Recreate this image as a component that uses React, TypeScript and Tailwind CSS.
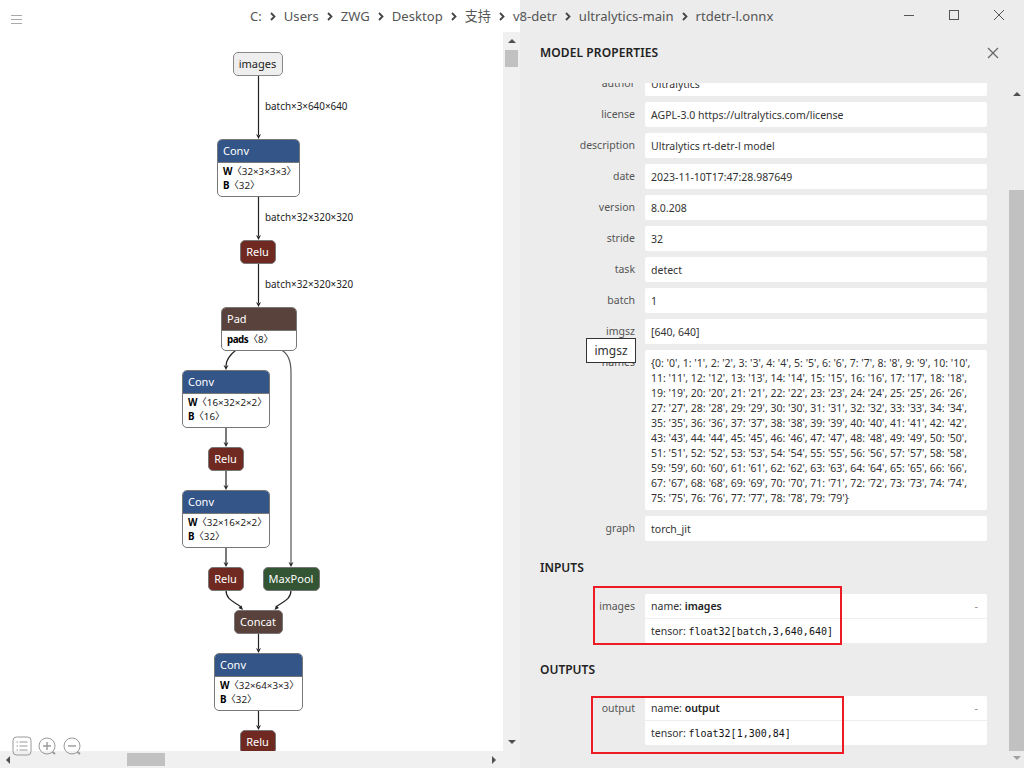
const FONT = "font-['Noto_Sans','Noto_Sans_CJK_SC',sans-serif]";

const NAMES = [
  "{0: '0', 1: '1', 2: '2', 3: '3', 4: '4', 5: '5', 6: '6', 7: '7', 8: '8', 9: '9', 10: '10',",
  "11: '11', 12: '12', 13: '13', 14: '14', 15: '15', 16: '16', 17: '17', 18: '18',",
  "19: '19', 20: '20', 21: '21', 22: '22', 23: '23', 24: '24', 25: '25', 26: '26',",
  "27: '27', 28: '28', 29: '29', 30: '30', 31: '31', 32: '32', 33: '33', 34: '34',",
  "35: '35', 36: '36', 37: '37', 38: '38', 39: '39', 40: '40', 41: '41', 42: '42',",
  "43: '43', 44: '44', 45: '45', 46: '46', 47: '47', 48: '48', 49: '49', 50: '50',",
  "51: '51', 52: '52', 53: '53', 54: '54', 55: '55', 56: '56', 57: '57', 58: '58',",
  "59: '59', 60: '60', 61: '61', 62: '62', 63: '63', 64: '64', 65: '65', 66: '66',",
  "67: '67', 68: '68', 69: '69', 70: '70', 71: '71', 72: '72', 73: '73', 74: '74',",
  "75: '75', 76: '76', 77: '77', 78: '78', 79: '79'}",
];

const PROPS = [
  ["author", "Ultralytics"],
  ["license", "AGPL-3.0 https://ultralytics.com/license"],
  ["description", "Ultralytics rt-detr-l model"],
  ["date", "2023-11-10T17:47:28.987649"],
  ["version", "8.0.208"],
  ["stride", "32"],
  ["task", "detect"],
  ["batch", "1"],
  ["imgsz", "[640, 640]"],
];

const CRUMBS = ["C:", "Users", "ZWG", "Desktop", "支持", "v8-detr", "ultralytics-main"];

function Chevron() {
  return (
    <svg width="6" height="9" viewBox="0 0 6 9" className="mx-[8px]">
      <path d="M1 1l3.5 3.5L1 8" fill="none" stroke="#444" strokeWidth="1.8" />
    </svg>
  );
}

function Pill({ className, label }: { className: string; label: string }) {
  return (
    <div className={`absolute flex h-[24px] items-center justify-center rounded-[5px] border-[1.5px] border-[#777] pr-[1px] text-[11px] text-white ${className}`}>
      {label}
    </div>
  );
}

function OpNode({ className, head, title, rows }: { className: string; head: string; title: string; rows: [string, string][] }) {
  return (
    <div className={`absolute overflow-hidden rounded-[5px] border-[1.5px] border-[#777] bg-white text-[9.8px] leading-[14px] text-[#222] ${className}`}>
      <div className={`flex h-[22px] items-center pb-[1px] pl-[5px] text-[11px] text-white ${head}`}>{title}</div>
      <div className="border-t border-[#777] pt-[2px] pl-[5px]">
        {rows.map(([k, v]) => (
          <div key={k} className="whitespace-nowrap">
            <b className="font-bold tracking-[-0.5px] text-black">{k}</b>
            <span>{v}</span>
          </div>
        ))}
      </div>
    </div>
  );
}

function EdgeLabel({ className, text }: { className: string; text: string }) {
  return <div className={`absolute text-[9.9px] leading-[14px] whitespace-nowrap text-[#222] ${className}`}>{text}</div>;
}

function Graph() {
  const arrows = [
    [258.5, 139], [258.5, 240], [258.5, 307], [226, 370], [226, 447], [226, 490], [226, 567],
    [291, 567], [258.5, 653], [258.5, 730],
  ];
  return (
    <div className="relative w-[503px] overflow-hidden bg-white">
      <svg className="absolute top-0 left-0" width="503" height="719" viewBox="0 32 503 719" fill="none">
        <g stroke="#222" strokeWidth="1.2">
          <path d="M258.5 75V135M258.5 196V236M258.5 263V303M258.5 633V649M258.5 710V726" />
          <path d="M226 427V443M226 470V486M226 547V563" />
          <path d="M236 350C231 354 226 359 226 366" />
          <path d="M281.5 350C287 353 291 359 291 372V563" stroke="#555" />
          <path d="M226 590C226 601 236 602 241 607" />
          <path d="M291 590C291 601 281 602 276 607" />
        </g>
        <g fill="#222">
          {arrows.map(([x, y]) => (
            <path key={`${x}-${y}`} d={`M${x} ${y}l-2.5 -5l2.5 1.5l2.5 -1.5z`} />
          ))}
          <path d="M243 610l-4.5 -2l3 -2.5z" />
          <path d="M274.5 610l4.5 -2l-3 -2.5z" />
        </g>
      </svg>

      <div className="absolute top-[20px] left-[233px] flex h-[24px] w-[50px] items-center justify-center rounded-[5px] border-[1.5px] border-[#888] bg-[#eeeeee] pr-[1px] text-[11px] text-[#222]">
        images
      </div>
      <EdgeLabel className="top-[67px] left-[265px]" text="batch×3×640×640" />
      <OpNode className="top-[107px] left-[217px] h-[58px] w-[83px]" head="bg-[#335588]" title="Conv" rows={[["W", "〈32×3×3×3〉"], ["B", "〈32〉"]]} />
      <EdgeLabel className="top-[178px] left-[265px]" text="batch×32×320×320" />
      <Pill className="top-[208px] left-[240px] w-[36px] bg-[#702921]" label="Relu" />
      <EdgeLabel className="top-[245px] left-[265px]" text="batch×32×320×320" />
      <OpNode className="top-[275px] left-[221px] h-[44px] w-[76px]" head="bg-[#59423b]" title="Pad" rows={[["pads", "〈8〉"]]} />
      <OpNode className="top-[338px] left-[182px] h-[58px] w-[88px]" head="bg-[#335588]" title="Conv" rows={[["W", "〈16×32×2×2〉"], ["B", "〈16〉"]]} />
      <Pill className="top-[415px] left-[208px] w-[36px] bg-[#702921]" label="Relu" />
      <OpNode className="top-[458px] left-[182px] h-[58px] w-[88px]" head="bg-[#335588]" title="Conv" rows={[["W", "〈32×16×2×2〉"], ["B", "〈32〉"]]} />
      <Pill className="top-[535px] left-[208px] w-[36px] bg-[#702921]" label="Relu" />
      <Pill className="top-[535px] left-[263px] w-[57px] bg-[#335533]" label="MaxPool" />
      <Pill className="top-[578px] left-[234px] w-[49px] bg-[#59423b]" label="Concat" />
      <OpNode className="top-[621px] left-[214px] h-[58px] w-[89px]" head="bg-[#335588]" title="Conv" rows={[["W", "〈32×64×3×3〉"], ["B", "〈32〉"]]} />
      <Pill className="top-[698px] left-[240px] w-[36px] bg-[#702921]" label="Relu" />
    </div>
  );
}

function LeftPane() {
  return (
    <div className="flex w-[520px] flex-col">
      <div className="h-[32px] bg-white" />
      <div className="flex h-[719px]">
        <Graph />
        <div className="flex w-[17px] flex-col items-center bg-[#f0f0f0] pt-[7px]">
          <div className="h-0 w-0 border-x-[4px] border-b-[4px] border-x-transparent border-b-[#505050]" />
          <div className="mt-[7px] h-[17px] w-[13px] bg-[#c1c1c1]" />
          <div className="mt-auto mb-[7px] h-0 w-0 border-x-[4px] border-t-[4px] border-x-transparent border-t-[#505050]" />
        </div>
      </div>
      <div className="flex h-[17px] items-center bg-[#f0f0f0] pl-[6px]">
        <div className="h-0 w-0 border-y-[4px] border-r-[4px] border-y-transparent border-r-[#505050]" />
        <div className="ml-[117px] h-[13px] w-[38px] bg-[#c1c1c1]" />
        <div className="ml-[327px] h-0 w-0 border-y-[4px] border-l-[4px] border-y-transparent border-l-[#505050]" />
      </div>
    </div>
  );
}

function PropRow({ label, children }: { label: string; children: React.ReactNode }) {
  return (
    <div className="mb-[6px] flex">
      <div className="w-[105px] shrink-0 pt-[5px] pr-[10px] text-right text-[#555]">{label}</div>
      <div className="w-[342px] rounded-[2px] bg-white px-[6px] pt-[5.5px] pb-[4.5px] text-[#333]">{children}</div>
    </div>
  );
}

function ArgRow({ label, name, type, box }: { label: string; name: string; type: string; box: string }) {
  return (
    <div className="relative flex">
      <div className="w-[105px] shrink-0 pt-[5px] pr-[10px] text-right text-[#555]">{label}</div>
      <div className="w-[342px] rounded-[2px] bg-white text-[#333]">
        <div className="flex h-[25px] items-center justify-between border-b border-[#eeeeee] px-[6px] pt-[1px]">
          <span>
            name: <b className="font-semibold text-[#222]">{name}</b>
          </span>
          <span className="pr-[3px] text-[#888]">-</span>
        </div>
        <div className="flex h-[24px] items-center px-[6px]">
          <span>tensor:&nbsp;</span>
          <code className="font-['DejaVu_Sans_Mono',monospace] text-[10px] text-[#111]">{type}</code>
        </div>
      </div>
      <div className={`absolute border-2 border-[#ed1c24] ${box}`} />
    </div>
  );
}

function RightPane() {
  return (
    <div className="flex w-[504px] flex-col bg-[#ececec] text-[10.5px] leading-[15px]">
      <div className="flex h-[83px] shrink-0 items-start justify-between pt-[45px] pr-[25px] pl-[20px]">
        <h1 className="text-[12px] leading-[15px] font-semibold tracking-[0.1px] text-[#222]">MODEL PROPERTIES</h1>
        <svg width="12" height="12" viewBox="0 0 12 12" className="mt-[2px]">
          <path d="M1 1l10 10M11 1L1 11" stroke="#666" strokeWidth="1.2" />
        </svg>
      </div>
      <div className="flex h-[685px]">
        <div className="w-[489px] overflow-hidden pl-[20px]">
          <div className="mt-[-12px]">
            {PROPS.map(([k, v]) => (
              <PropRow key={k} label={k}>{v}</PropRow>
            ))}
            <PropRow label="names">
              {NAMES.map((line) => (
                <div key={line} className="whitespace-nowrap">{line}</div>
              ))}
            </PropRow>
            <PropRow label="graph">torch_jit</PropRow>
            <h2 className="mt-[19px] mb-[18px] text-[12px] leading-[16px] font-semibold text-[#222]">INPUTS</h2>
            <ArgRow label="images" name="images" type="float32[batch,3,640,640]" box="top-[-8px] left-[53px] h-[59px] w-[249px]" />
            <h2 className="mt-[19px] mb-[18px] text-[12px] leading-[16px] font-semibold text-[#222]">OUTPUTS</h2>
            <ArgRow label="output" name="output" type="float32[1,300,84]" box="top-0 left-[51px] h-[58px] w-[253px]" />
          </div>
        </div>
        <div className="flex w-[15px] flex-col items-center pt-[9px]">
          <div className="h-0 w-0 border-x-[4px] border-b-[4px] border-x-transparent border-b-[#505050]" />
          <div className="mt-[94px] h-[561px] w-[15px] bg-[#c1c1c1]" />
          <div className="mt-[5px] h-0 w-0 border-x-[4px] border-t-[4px] border-x-transparent border-t-[#a0a0a0]" />
        </div>
      </div>
    </div>
  );
}

export default function App() {
  return (
    <div className={`relative flex h-[768px] w-[1024px] overflow-hidden bg-white ${FONT}`}>
      <LeftPane />
      <RightPane />

      {/* hamburger, floats over the graph */}
      <svg className="absolute top-[15px] left-[11px]" width="11" height="10" viewBox="0 0 11 10">
        <path d="M0 .5h11M0 4.5h11M0 8.5h11" stroke="#aaa" />
      </svg>

      {/* path title runs across both panes */}
      <div className="absolute top-[7px] left-[250px] flex h-[20px] items-center text-[13.1px] whitespace-nowrap text-[#555]">
        {CRUMBS.map((c) => (
          <span key={c} className="flex items-center">
            {c}
            <Chevron />
          </span>
        ))}
        rtdetr-l.onnx
      </div>

      {/* window buttons */}
      <div className="absolute top-[10px] left-[904px] flex items-center gap-[35px]">
        <svg width="10" height="10" viewBox="0 0 10 10"><path d="M0 5.5h10" stroke="#555" /></svg>
        <svg width="10" height="10" viewBox="0 0 10 10"><rect x=".5" y=".5" width="9" height="9" fill="none" stroke="#555" /></svg>
        <svg width="10" height="10" viewBox="0 0 10 10"><path d="M0 0l10 10M10 0L0 10" stroke="#555" /></svg>
      </div>

      {/* graph toolbar */}
      <svg className="absolute top-[736px] left-[12px]" width="72" height="20" viewBox="0 0 72 20" fill="none" stroke="#999" strokeWidth="1">
        <rect x="1" y="1" width="18" height="18" rx="3.5" />
        <path d="M4.5 6h1.5M7.5 6h8M4.5 10h1.5M7.5 10h8M4.5 14h1.5M7.5 14h8" />
        <circle cx="35" cy="10" r="8" />
        <path d="M31 10h8M35 6v8" strokeWidth="1.4" />
        <path d="M40.5 16l2.5 2" strokeWidth="2" />
        <circle cx="60" cy="10" r="8" />
        <path d="M56 10h8" strokeWidth="1.4" />
        <path d="M65.5 16l2.5 2" strokeWidth="2" />
      </svg>

      {/* hover tooltip */}
      <div className="absolute top-[338px] left-[586px] flex h-[25px] w-[50px] items-center justify-center border border-[#333] bg-white text-[12px] text-[#333]">
        imgsz
      </div>
    </div>
  );
}
